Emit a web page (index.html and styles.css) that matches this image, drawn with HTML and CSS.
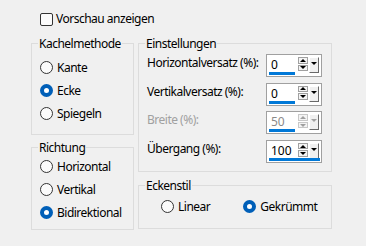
FILE: index.html
```html
<!DOCTYPE html>
<html lang="de">
<head>
<meta charset="utf-8">
<link rel="stylesheet" href="styles.css">
</head>
<body>
<div class="dlg">
  <label class="check"><span class="cbox"></span>Vorschau anzeigen</label>
  <div class="cols">
    <div class="col col-left">
      <fieldset class="grp kachel">
        <legend>Kachelmethode</legend>
        <div class="radio"><span class="rb"></span>Kante</div>
        <div class="radio"><span class="rb on"></span>Ecke</div>
        <div class="radio"><span class="rb"></span>Spiegeln</div>
      </fieldset>
      <fieldset class="grp richtung">
        <legend>Richtung</legend>
        <div class="radio"><span class="rb"></span>Horizontal</div>
        <div class="radio"><span class="rb"></span>Vertikal</div>
        <div class="radio"><span class="rb on"></span>Bidirektional</div>
      </fieldset>
    </div>
    <div class="col col-right">
      <fieldset class="grp einst">
        <legend>Einstellungen</legend>
        <div class="row">
          <span class="lbl">Horizontalversatz (%):</span>
          <div class="spin">
            <div class="spin-top">
              <span class="val">0</span>
              <div class="ud"><span class="btn up"></span><span class="btn dn"></span></div>
              <span class="drop"></span>
            </div>
            <div class="bar" style="width:26px"></div>
          </div>
        </div>
        <div class="row">
          <span class="lbl">Vertikalversatz (%):</span>
          <div class="spin">
            <div class="spin-top">
              <span class="val">0</span>
              <div class="ud"><span class="btn up"></span><span class="btn dn"></span></div>
              <span class="drop"></span>
            </div>
            <div class="bar" style="width:26px"></div>
          </div>
        </div>
        <div class="row disabled">
          <span class="lbl">Breite (%):</span>
          <div class="spin">
            <div class="spin-top">
              <span class="val">50</span>
              <div class="ud"><span class="btn up"></span><span class="btn dn"></span></div>
              <span class="drop"></span>
            </div>
            <div class="bar" style="width:26px"></div>
          </div>
        </div>
        <div class="row">
          <span class="lbl">Übergang (%):</span>
          <div class="spin">
            <div class="spin-top">
              <span class="val">100</span>
              <div class="ud"><span class="btn up"></span><span class="btn dn"></span></div>
              <span class="drop"></span>
            </div>
            <div class="bar" style="width:51px"></div>
          </div>
        </div>
      </fieldset>
      <fieldset class="grp ecken">
        <legend>Eckenstil</legend>
        <div class="hradios">
          <div class="radio"><span class="rb"></span>Linear</div>
          <div class="radio"><span class="rb on"></span>Gekrümmt</div>
        </div>
      </fieldset>
    </div>
  </div>
</div>
</body>
</html>
```

FILE: styles.css
```css
html, body {
  margin: 0;
  background: #f0f0f0;
}
body {
  font-family: "Segoe UI", "Noto Sans", "DejaVu Sans", sans-serif;
  font-size: 12px;
  letter-spacing: -0.5px;
  color: #000;
}
.dlg {
  padding: 11px 0 0 31px;
}
.check {
  display: flex;
  align-items: center;
  gap: 3px;
  margin-left: 9px;
  height: 16px;
  line-height: 16px;
}
.cbox {
  width: 11px;
  height: 11px;
  border: 1px solid #333;
  border-radius: 2px;
  background: #fbfbfb;
}
.cols {
  display: flex;
  gap: 4px;
  margin-top: 9px;
}
.col {
  display: flex;
  flex-direction: column;
}
.col-left { width: 103px; }
.col-right { width: 194px; }
.grp {
  margin: 0;
  border: 1px solid #dcdcdc;
  padding: 0 8px;
  min-width: 0;
}
.grp legend {
  padding: 0 1px;
  margin-left: -2px;
  line-height: 15px;
}
.kachel { padding-top: 5px; padding-bottom: 9px; }
.richtung { margin-top: 5px; padding-top: 0; padding-bottom: 5px; }
.einst { padding-top: 3px; padding-bottom: 8px; }
.ecken { margin-top: 6.5px; padding-top: 2px; padding-bottom: 10px; }

.radio {
  display: flex;
  align-items: center;
  gap: 4px;
  height: 23px;
  white-space: nowrap;
}
.rb {
  box-sizing: border-box;
  width: 13px;
  height: 13px;
  border: 1px solid #333;
  border-radius: 50%;
  background: #fbfbfb;
  flex: none;
}
.rb.on {
  border: 4px solid #005fb8;
  background: #fff;
}
.hradios {
  display: flex;
  gap: 33px;
  padding-left: 14px;
}

.einst .row {
  display: flex;
  justify-content: space-between;
  align-items: flex-start;
  height: 23px;
  margin-bottom: 5.67px;
}
.einst .row:last-of-type { margin-bottom: 0; }
.lbl {
  line-height: 15px;
  padding-top: 1px;
  white-space: nowrap;
}
.disabled .lbl { color: #a0a0a0; }
.spin {
  box-sizing: border-box;
  width: 56px;
  height: 23px;
  margin-right: 1px;
  border: 1px solid #a0a0a0;
  background: #fff;
  padding: 1px 2px 1px 2px;
  display: flex;
  flex-direction: column;
  letter-spacing: 0;
}
.spin-top {
  display: flex;
  height: 15px;
}
.val {
  flex: 1;
  padding-left: 2px;
  padding-top: 2px;
  line-height: 13px;
}
.disabled .val { color: #8a8a8a; }
.ud {
  display: flex;
  flex-direction: column;
  gap: 1px;
  margin-top: 1px;
  margin-right: 1px;
}
.btn {
  box-sizing: border-box;
  width: 10px;
  height: 7px;
  border: 1px solid #a0a0a0;
  background: #f4f4f4;
  display: flex;
  align-items: center;
  justify-content: center;
}
.btn::after {
  content: "";
  border-left: 3px solid transparent;
  border-right: 3px solid transparent;
}
.up::after { border-bottom: 3px solid #000; }
.dn::after { border-top: 3px solid #000; }
.drop {
  box-sizing: border-box;
  width: 10px;
  height: 16px;
  margin-top: 1px;
  border-top: 1px solid #fff;
  border-left: 1px solid #fff;
  border-right: 1px solid #696969;
  border-bottom: 1px solid #696969;
  background: #f0f0f0;
  display: flex;
  justify-content: center;
  padding-top: 4px;
}
.drop::after {
  content: "";
  width: 0;
  height: 0;
  border-left: 3px solid transparent;
  border-right: 3px solid transparent;
  border-top: 3px solid #000;
}
.disabled .up::after { border-bottom-color: #a0a0a0; }
.disabled .dn::after, .disabled .drop::after { border-top-color: #a0a0a0; }
.disabled .btn { border-color: #c8c8c8; }
.bar {
  height: 3px;
  margin-top: 1px;
  background: #0078d7;
}
```
